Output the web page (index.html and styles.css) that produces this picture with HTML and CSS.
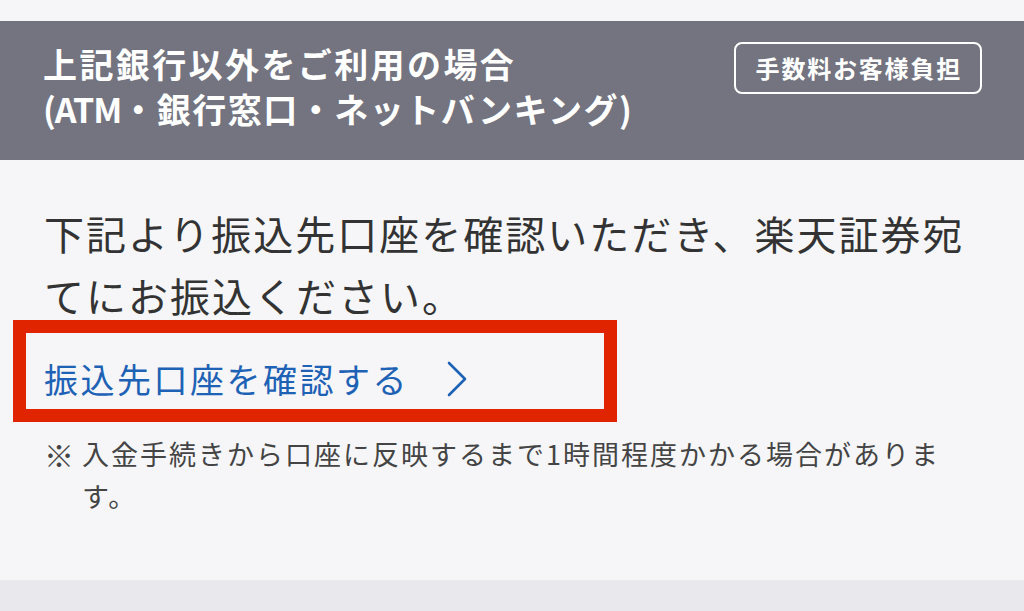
FILE: index.html
```html
<!DOCTYPE html>
<html lang="ja">
  <head>
    <meta charset="UTF-8" />
    <meta name="viewport" content="width=device-width, initial-scale=1.0" />
    <title>入金方法</title>
    <link rel="stylesheet" href="styles.css">
  </head>
  <body>
    <div class="top-gap"></div>
    <div class="section-head">
      <h2 class="head-title">上記銀行以外をご利用の場合<br /><span class="sub"><span class="latin">(ATM</span>・銀行窓口・ネットバンキング<span class="latin">)</span></span></h2>
      <span class="fee-badge">手数料お客様負担</span>
    </div>
    <div class="content">
      <p class="lead">下記より振込先口座を確認いただき、楽天証券宛てにお振込ください。</p>
      <div class="link-box">
        <a class="account-link" href="#">振込先口座を確認する
          <svg class="chevron" width="20" height="36" viewBox="0 0 20 36">
            <polyline points="2,2 18,18 2,34" fill="none" stroke="#1e62b6" stroke-width="2.6" stroke-linecap="round" stroke-linejoin="round" />
          </svg>
        </a>
      </div>
      <div class="note">
        <span class="note-mark">※</span>
        <span class="note-text">入金手続きから口座に反映するまで1時間程度かかる場合があります。</span>
      </div>
    </div>
    <div class="bottom-band"></div>
  </body>
</html>
```

FILE: styles.css
```css
body {
  margin: 0;
  background-color: #f6f6f8;
  font-family: "Noto Sans CJK JP", "Noto Sans", sans-serif;
  color: #333;
}

.top-gap {
  height: 21px;
}

.section-head {
  background-color: #73747f;
  display: flex;
  justify-content: space-between;
  align-items: flex-start;
  padding: 20px 42px 29px 43px;
}

.head-title {
  margin: 0;
  color: white;
  font-size: 34px;
  line-height: 45px;
  font-weight: 700;
  letter-spacing: 2.4px;
}

.head-title .sub {
  letter-spacing: 1.5px;
}

.head-title .latin {
  letter-spacing: -1px;
}

.fee-badge {
  margin-top: 1px;
  border: 2px solid white;
  border-radius: 8px;
  color: white;
  font-size: 24px;
  font-weight: 700;
  line-height: 48px;
  letter-spacing: 1.8px;
  padding: 0 18px 0 20px;
}

.content {
  padding: 42px 44px 63px 44px;
}

.lead {
  margin: 0;
  font-size: 40px;
  line-height: 62px;
  letter-spacing: 2px;
  color: #333;
}

.link-box {
  margin: -6px 0 0 -31px;
  width: 604px;
  box-sizing: border-box;
  border: 13px solid #e12400;
  padding: 22px 0 6px 18px;
}

.account-link {
  display: flex;
  align-items: center;
  gap: 38px;
  color: #1e62b6;
  text-decoration: none;
  font-size: 34px;
  line-height: 48px;
  letter-spacing: 2.5px;
}

.chevron {
  display: block;
}

.note {
  display: flex;
  margin-top: 11px;
  font-size: 27px;
  line-height: 42px;
  letter-spacing: 2px;
  color: #444;
}

.note-mark {
  flex: none;
  width: 38px;
  font-size: 30px;
  letter-spacing: 0;
}

.note-text {
  width: 870px;
}

.bottom-band {
  height: 31px;
  background-color: #e9e9ed;
}
```
